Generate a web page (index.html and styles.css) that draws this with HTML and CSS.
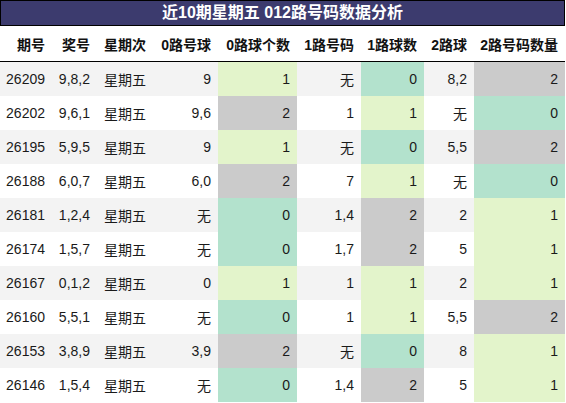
FILE: index.html
```html
<!DOCTYPE html>
<html>

<head>
    <meta charset="utf-8">
    <link rel="stylesheet" href="styles.css">
    <title>近10期星期五 012路号码数据分析</title>
</head>

<body>
    <div class="page">
        <div class="title">近10期星期五 012路号码数据分析</div>

        <table class="data">
            <colgroup>
                <col style="width: 52px">
                <col style="width: 45px">
                <col style="width: 56px">
                <col style="width: 65px">
                <col style="width: 79px">
                <col style="width: 64px">
                <col style="width: 63px">
                <col style="width: 50px">
                <col style="width: 91px">
            </colgroup>
            <thead>
                <tr>
                    <th>期号</th>
                    <th>奖号</th>
                    <th>星期次</th>
                    <th>0路号球</th>
                    <th>0路球个数</th>
                    <th>1路号码</th>
                    <th>1路球数</th>
                    <th>2路球</th>
                    <th>2路号码数量</th>
                </tr>
            </thead>
            <tbody>
                <tr>
                    <td>26209</td><td>9,8,2</td><td>星期五</td>
                    <td>9</td><td class="n1">1</td>
                    <td>无</td><td class="n0">0</td>
                    <td>8,2</td><td class="n2">2</td>
                </tr>
                <tr>
                    <td>26202</td><td>9,6,1</td><td>星期五</td>
                    <td>9,6</td><td class="n2">2</td>
                    <td>1</td><td class="n1">1</td>
                    <td>无</td><td class="n0">0</td>
                </tr>
                <tr>
                    <td>26195</td><td>5,9,5</td><td>星期五</td>
                    <td>9</td><td class="n1">1</td>
                    <td>无</td><td class="n0">0</td>
                    <td>5,5</td><td class="n2">2</td>
                </tr>
                <tr>
                    <td>26188</td><td>6,0,7</td><td>星期五</td>
                    <td>6,0</td><td class="n2">2</td>
                    <td>7</td><td class="n1">1</td>
                    <td>无</td><td class="n0">0</td>
                </tr>
                <tr>
                    <td>26181</td><td>1,2,4</td><td>星期五</td>
                    <td>无</td><td class="n0">0</td>
                    <td>1,4</td><td class="n2">2</td>
                    <td>2</td><td class="n1">1</td>
                </tr>
                <tr>
                    <td>26174</td><td>1,5,7</td><td>星期五</td>
                    <td>无</td><td class="n0">0</td>
                    <td>1,7</td><td class="n2">2</td>
                    <td>5</td><td class="n1">1</td>
                </tr>
                <tr>
                    <td>26167</td><td>0,1,2</td><td>星期五</td>
                    <td>0</td><td class="n1">1</td>
                    <td>1</td><td class="n1">1</td>
                    <td>2</td><td class="n1">1</td>
                </tr>
                <tr>
                    <td>26160</td><td>5,5,1</td><td>星期五</td>
                    <td>无</td><td class="n0">0</td>
                    <td>1</td><td class="n1">1</td>
                    <td>5,5</td><td class="n2">2</td>
                </tr>
                <tr>
                    <td>26153</td><td>3,8,9</td><td>星期五</td>
                    <td>3,9</td><td class="n2">2</td>
                    <td>无</td><td class="n0">0</td>
                    <td>8</td><td class="n1">1</td>
                </tr>
                <tr>
                    <td>26146</td><td>1,5,4</td><td>星期五</td>
                    <td>无</td><td class="n0">0</td>
                    <td>1,4</td><td class="n2">2</td>
                    <td>5</td><td class="n1">1</td>
                </tr>
            </tbody>
        </table>
    </div>
</body>

</html>
```

FILE: styles.css
```css
body {
    margin: 0;
    background: #ffffff;
    font-family: "Liberation Sans", "Noto Sans CJK SC", sans-serif;
    font-size: 14px;
    color: #1a1a1a;
}

.page {
    width: 565px;
}

.title {
    height: 24px;
    border: 1px solid #000000;
    background: #3c3b6e;
    color: #ffffff;
    font-size: 16px;
    font-weight: bold;
    line-height: 24px;
    text-align: center;
}

.data {
    width: 565px;
    table-layout: fixed;
    border-collapse: collapse;
}

th,
td {
    padding: 0 7px 0 0;
    text-align: right;
    white-space: nowrap;
}

th {
    height: 35px;
    font-weight: bold;
    color: #111111;
    border-bottom: 1px solid #000000;
}

td {
    height: 34px;
}

tbody tr:nth-child(odd) {
    background: #f3f3f3;
}

tbody tr:nth-child(even) {
    background: #ffffff;
}

td.n0 {
    background: #b3e2cd;
}

td.n1 {
    background: #e3f4cb;
}

td.n2 {
    background: #cbcbcb;
}
```
